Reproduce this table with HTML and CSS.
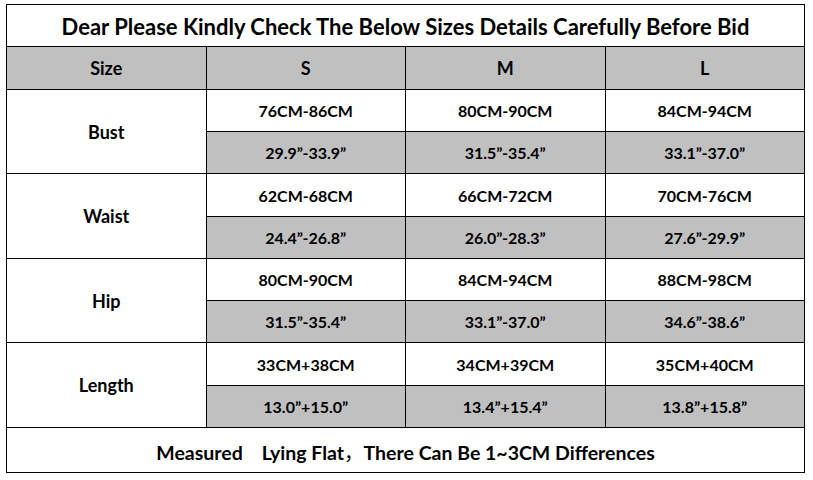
FILE: index.html
```html
<!DOCTYPE html>
<html>
<head>
<meta charset="utf-8">
<link rel="stylesheet" href="styles.css">
</head>
<body>
<table class="chart">
  <tr class="title-row"><td colspan="4" class="title">Dear Please Kindly Check The Below Sizes Details Carefully Before Bid</td></tr>
  <tr class="head-row"><td>Size</td><td>S</td><td>M</td><td>L</td></tr>
  <tr class="sub"><td rowspan="2" class="label">Bust</td><td>76CM-86CM</td><td>80CM-90CM</td><td>84CM-94CM</td></tr>
  <tr class="sub gray"><td>29.9”-33.9”</td><td>31.5”-35.4”</td><td>33.1”-37.0”</td></tr>
  <tr class="sub tall"><td rowspan="2" class="label">Waist</td><td>62CM-68CM</td><td>66CM-72CM</td><td>70CM-76CM</td></tr>
  <tr class="sub gray"><td>24.4”-26.8”</td><td>26.0”-28.3”</td><td>27.6”-29.9”</td></tr>
  <tr class="sub"><td rowspan="2" class="label">Hip</td><td>80CM-90CM</td><td>84CM-94CM</td><td>88CM-98CM</td></tr>
  <tr class="sub gray"><td>31.5”-35.4”</td><td>33.1”-37.0”</td><td>34.6”-38.6”</td></tr>
  <tr class="sub tall"><td rowspan="2" class="label">Length</td><td>33CM+38CM</td><td>34CM+39CM</td><td>35CM+40CM</td></tr>
  <tr class="sub gray"><td>13.0”+15.0”</td><td>13.4”+15.4”</td><td>13.8”+15.8”</td></tr>
  <tr class="foot-row"><td colspan="4" class="foot">Measured&nbsp;&nbsp;&nbsp;&nbsp;Lying Flat<span class="comma">，</span>There Can Be 1~3CM Differences</td></tr>
</table>
</body>
</html>
```
FILE: styles.css
```css
html, body { margin: 0; padding: 0; background: #ffffff; }
body { padding: 4px 0 0 6px; }
.chart {
  border-collapse: collapse;
  width: 799px;
  table-layout: fixed;
  font-family: "Lato", "Liberation Sans", sans-serif;
  font-weight: 700;
  color: #000;
}
.chart td {
  border: 1px solid #000;
  text-align: center;
  vertical-align: middle;
  padding: 0;
  font-size: 16px;
}
.chart .title-row td { height: 39px; font-size: 22px; padding-top: 2px; }
.chart .head-row td { height: 42px; background: #c0c0c0; font-size: 18px; }
.chart .sub td { height: 41px; }
.chart .sub.tall td { height: 42px; }
.chart .gray td { background: #c0c0c0; }
.chart td.label { font-size: 18px; background: #fff; }
.chart .foot-row td { height: 42px; font-size: 19.5px; padding-top: 2px; }
.comma { font-family: "Noto Sans CJK SC", sans-serif; font-weight: 400; }
.chart tr td:first-child { width: 198px; }
```
